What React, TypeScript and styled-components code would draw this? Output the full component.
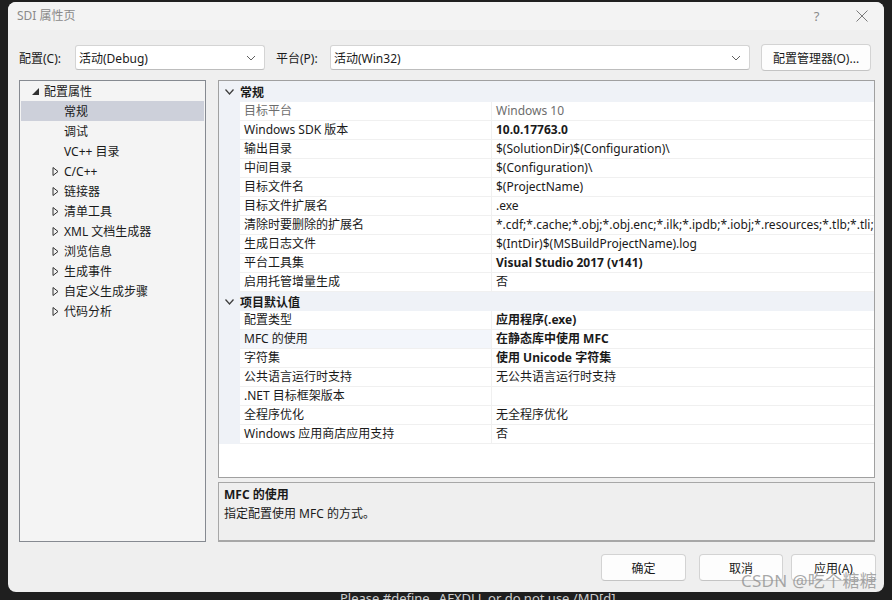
import styled, { createGlobalStyle } from 'styled-components';

const GlobalStyle = createGlobalStyle`
	html, body {
		margin: 0;
		padding: 0;
		background: #1f1f1f;
		overflow: hidden;
	}
	body {
		font-family: 'Noto Sans', 'Noto Sans CJK SC', sans-serif;
		font-size: 12px;
		color: #1a1a1a;
	}
`;

const Desktop = styled.div`
	width: 892px;
	height: 600px;
	display: flex;
	flex-direction: column;
	overflow: hidden;
`;

const Dialog = styled.div`
	position: relative;
	margin: 2px 8px 0 8px;
	width: 876px;
	height: 590px;
	display: flex;
	flex-direction: column;
	background: #efefef;
	border-radius: 8px;
	overflow: hidden;
	flex-shrink: 0;
`;

const TitleBar = styled.div`
	height: 28px;
	display: flex;
	align-items: center;
	padding: 0 0 0 9px;
	background: #f3f3f3;
	color: #8a8a8a;
	font-size: 12px;
`;

const Title = styled.div`
	flex: 1;
	line-height: 28px;
`;

const TitleButton = styled.div`
	width: 45px;
	height: 28px;
	display: flex;
	align-items: center;
	justify-content: center;
	color: #8a8a8a;
	font-size: 13px;
`;

const Toolbar = styled.div`
	display: flex;
	align-items: center;
	height: 27px;
	margin: 14px 0 0 11px;
`;

const Label = styled.span<{ $width: number }>`
	width: ${(p) => p.$width}px;
	flex-shrink: 0;
`;

const Select = styled.div<{ $width: number }>`
	width: ${(p) => p.$width}px;
	height: 25px;
	box-sizing: border-box;
	display: flex;
	align-items: center;
	justify-content: space-between;
	padding: 0 8px 0 3px;
	background: #ffffff;
	border: 1px solid #d4d4d4;
	border-bottom-color: #bdbdbd;
	border-radius: 3px;
	margin-right: 11px;
`;

const Button = styled.div<{ $width: number }>`
	width: ${(p) => p.$width}px;
	height: 27px;
	box-sizing: border-box;
	display: flex;
	align-items: center;
	justify-content: center;
	background: #fdfdfd;
	border: 1px solid #d3d3d3;
	border-bottom-color: #c4c4c4;
	border-radius: 4px;
	color: #1a1a1a;
`;

const Main = styled.div`
	display: flex;
	gap: 12px;
	margin: 9px 0 0 11px;
	height: 462px;
`;

const Tree = styled.div`
	width: 187px;
	box-sizing: border-box;
	border: 1px solid #868a91;
	background: #f4f4f4;
	padding: 0 1px;
`;

const TreeRow = styled.div<{ $indent: number; $selected?: boolean }>`
	height: 20px;
	display: flex;
	align-items: center;
	padding-left: ${(p) => p.$indent}px;
	background: ${(p) => (p.$selected ? '#cdd0da' : 'transparent')};
`;

const Arrow = styled.span`
	width: 12px;
	display: flex;
	align-items: center;
	flex-shrink: 0;
`;

const RightCol = styled.div`
	width: 657px;
	display: flex;
	flex-direction: column;
	gap: 4px;
`;

const Grid = styled.div`
	height: 398px;
	box-sizing: border-box;
	border: 1px solid #a0a0a0;
	background: #ffffff;
	display: flex;
	flex-direction: column;
	overflow: hidden;
`;

const CategoryRow = styled.div<{ $first?: boolean }>`
	height: ${(p) => (p.$first ? 21 : 19)}px;
	flex-shrink: 0;
	display: flex;
	align-items: center;
	background: #eff2f7;
	font-weight: bold;
`;

const Chevron = styled.span`
	width: 21px;
	display: flex;
	justify-content: center;
	flex-shrink: 0;
`;

const PropRow = styled.div`
	height: 19px;
	flex-shrink: 0;
	display: flex;
`;

const Gutter = styled.div`
	width: 21px;
	flex-shrink: 0;
	background: #eff2f7;
`;

const NameCell = styled.div<{ $disabled?: boolean; $selected?: boolean }>`
	width: 252px;
	flex-shrink: 0;
	box-sizing: border-box;
	padding-left: 4px;
	line-height: 18px;
	border-bottom: 1px solid #f0f0f0;
	border-right: 1px solid #f0f0f0;
	color: ${(p) => (p.$disabled ? '#6d6d6d' : '#1a1a1a')};
	background: ${(p) => (p.$selected ? '#f3f6fb' : '#ffffff')};
	white-space: nowrap;
`;

const ValueCell = styled.div<{ $disabled?: boolean; $bold?: boolean }>`
	flex: 1;
	min-width: 0;
	padding-left: 4px;
	line-height: 18px;
	border-bottom: 1px solid #f0f0f0;
	color: ${(p) => (p.$disabled ? '#6d6d6d' : '#1a1a1a')};
	font-weight: ${(p) => (p.$bold ? 'bold' : 'normal')};
	white-space: nowrap;
	overflow: hidden;
`;

const Description = styled.div`
	height: 60px;
	box-sizing: border-box;
	border: 1px solid #a7a7a7;
	border-bottom-width: 2px;
	background: #efefef;
	padding: 2px 5px;
	line-height: 19px;
`;

const DescTitle = styled.div`
	font-weight: bold;
`;

const Footer = styled.div`
	display: flex;
	justify-content: flex-end;
	gap: 13px;
	margin: 12px 8px 0 0;
`;

const ButtonGroup = styled.div`
	display: flex;
	gap: 8px;
`;

const Watermark = styled.div`
	position: absolute;
	right: 7px;
	bottom: 0px;
	font-size: 17px;
	color: rgba(140, 140, 140, 0.75);
	letter-spacing: 0.3px;
	pointer-events: none;
`;

const BackText = styled.div`
	padding-left: 340px;
	color: #cfcfcf;
	font-size: 13px;
	line-height: 16px;
	margin-top: -2px;
`;

function DropArrow() {
	return (
		<svg width='10' height='6' viewBox='0 0 10 6'>
			<path d='M1 1 L5 5 L9 1' fill='none' stroke='#606060' strokeWidth='1' />
		</svg>
	);
}

function Collapsed() {
	return (
		<svg width='7' height='9' viewBox='0 0 7 9'>
			<path d='M1 0.5 L6 4.5 L1 8.5 Z' fill='none' stroke='#303030' strokeWidth='1' />
		</svg>
	);
}

function Expanded() {
	return (
		<svg width='7' height='7' viewBox='0 0 7 7'>
			<path d='M7 0 L7 7 L0 7 Z' fill='#303030' />
		</svg>
	);
}

function CategoryChevron() {
	return (
		<svg width='9' height='6' viewBox='0 0 9 6'>
			<path d='M0.5 0.5 L4.5 5 L8.5 0.5' fill='none' stroke='#404040' strokeWidth='1.3' />
		</svg>
	);
}

type Prop = {
	name: string;
	value: string;
	bold?: boolean;
	disabled?: boolean;
	selected?: boolean;
};

const general: Prop[] = [
	{ name: '目标平台', value: 'Windows 10', disabled: true },
	{ name: 'Windows SDK 版本', value: '10.0.17763.0', bold: true },
	{ name: '输出目录', value: '$(SolutionDir)$(Configuration)\\' },
	{ name: '中间目录', value: '$(Configuration)\\' },
	{ name: '目标文件名', value: '$(ProjectName)' },
	{ name: '目标文件扩展名', value: '.exe' },
	{ name: '清除时要删除的扩展名', value: '*.cdf;*.cache;*.obj;*.obj.enc;*.ilk;*.ipdb;*.iobj;*.resources;*.tlb;*.tli;*.tlh;*.tmp;*.rsp' },
	{ name: '生成日志文件', value: '$(IntDir)$(MSBuildProjectName).log' },
	{ name: '平台工具集', value: 'Visual Studio 2017 (v141)', bold: true },
	{ name: '启用托管增量生成', value: '否' },
];

const defaults: Prop[] = [
	{ name: '配置类型', value: '应用程序(.exe)', bold: true },
	{ name: 'MFC 的使用', value: '在静态库中使用 MFC', bold: true, selected: true },
	{ name: '字符集', value: '使用 Unicode 字符集', bold: true },
	{ name: '公共语言运行时支持', value: '无公共语言运行时支持' },
	{ name: '.NET 目标框架版本', value: '' },
	{ name: '全程序优化', value: '无全程序优化' },
	{ name: 'Windows 应用商店应用支持', value: '否' },
];

const treeItems = ['C/C++', '链接器', '清单工具', 'XML 文档生成器', '浏览信息', '生成事件', '自定义生成步骤', '代码分析'];

function Section({ title, props, first }: { title: string; props: Prop[]; first?: boolean }) {
	return (
		<>
			<CategoryRow $first={first}>
				<Chevron>
					<CategoryChevron />
				</Chevron>
				{title}
			</CategoryRow>
			{props.map((p) => (
				<PropRow key={p.name}>
					<Gutter />
					<NameCell $disabled={p.disabled} $selected={p.selected}>
						{p.name}
					</NameCell>
					<ValueCell $disabled={p.disabled} $bold={p.bold}>
						{p.value}
					</ValueCell>
				</PropRow>
			))}
		</>
	);
}

export default function App() {
	return (
		<Desktop>
			<GlobalStyle />
			<Dialog>
				<TitleBar>
					<Title>SDI 属性页</Title>
					<TitleButton>?</TitleButton>
					<TitleButton>
						<svg width='12' height='12' viewBox='0 0 12 12'>
							<path d='M0.5 0.5 L11.5 11.5 M11.5 0.5 L0.5 11.5' stroke='#7a7a7a' strokeWidth='1' />
						</svg>
					</TitleButton>
				</TitleBar>

				<Toolbar>
					<Label $width={56}>配置(C):</Label>
					<Select $width={190}>
						<span>活动(Debug)</span>
						<DropArrow />
					</Select>
					<Label $width={54}>平台(P):</Label>
					<Select $width={420}>
						<span>活动(Win32)</span>
						<DropArrow />
					</Select>
					<Button $width={110}>配置管理器(O)...</Button>
				</Toolbar>

				<Main>
					<Tree>
						<TreeRow $indent={11}>
							<Arrow>
								<Expanded />
							</Arrow>
							配置属性
						</TreeRow>
						<TreeRow $indent={43} $selected>
							常规
						</TreeRow>
						<TreeRow $indent={43}>调试</TreeRow>
						<TreeRow $indent={43}>VC++ 目录</TreeRow>
						{treeItems.map((t) => (
							<TreeRow key={t} $indent={31}>
								<Arrow>
									<Collapsed />
								</Arrow>
								{t}
							</TreeRow>
						))}
					</Tree>

					<RightCol>
						<Grid>
							<Section title='常规' props={general} first />
							<Section title='项目默认值' props={defaults} />
						</Grid>
						<Description>
							<DescTitle>MFC 的使用</DescTitle>
							<div>指定配置使用 MFC 的方式。</div>
						</Description>
					</RightCol>
				</Main>

				<Footer>
					<Button $width={85}>确定</Button>
					<ButtonGroup>
						<Button $width={84}>取消</Button>
						<Button $width={85}>应用(A)</Button>
					</ButtonGroup>
				</Footer>

				<Watermark>CSDN @吃个糖糖</Watermark>
			</Dialog>
			<BackText>Please #define _AFXDLL or do not use /MD[d]</BackText>
		</Desktop>
	);
}
